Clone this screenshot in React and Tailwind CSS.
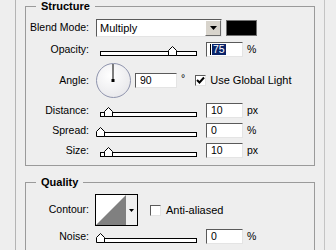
import React from "react";

const Label = ({ children }) => (
  <div className="w-[64px] shrink-0 text-right pr-[1px]">{children}</div>
);

const Input = ({ value, w = "w-[37px]", selected }) => (
  <div className={`${w} h-[15px] shrink-0 bg-white border-t border-l border-t-[#5a5a5a] border-l-[#5a5a5a] border-b border-r border-b-[#e4e4e4] border-r-[#e4e4e4] pl-[3px] flex items-center leading-none`}>
    {selected ? (
      <span className="flex items-center">
        <span className="w-[1px] h-[11px] bg-black mr-[1px]" />
        <span className="bg-[#0a246a] text-white px-[1px] h-[11px] flex items-center">{value}</span>
      </span>
    ) : (
      <span className="pl-[1px]">{value}</span>
    )}
  </div>
);

const Slider = ({ pos }) => (
  <div className="relative w-[97px] h-[15px] ml-[10px] shrink-0">
    <div className="absolute left-0 right-0 top-[9px] h-[5px] border border-black bg-white" />
    <svg className="absolute top-[4px]" style={{ left: pos - 4 }} width="9" height="10">
      <path d="M0.5 4.5 L4.5 0.5 L8.5 4.5 L8.5 9.5 L0.5 9.5 Z" fill="white" stroke="black" />
    </svg>
  </div>
);

const SliderRow = ({ label, value, unit, pos, selected, className = "" }) => (
  <div className={`flex items-center h-[15px] ${className}`}>
    <Label>{label}</Label>
    <Slider pos={pos} />
    <div className="ml-[9px]">
      <Input value={value} selected={selected} />
    </div>
    <span className="ml-[4px] leading-none">{unit}</span>
  </div>
);

const Check = ({ checked }) => (
  <div className="w-[11px] h-[11px] shrink-0 bg-white border-t border-l border-t-[#5a5a5a] border-l-[#5a5a5a] border-b border-r border-b-[#e4e4e4] border-r-[#e4e4e4] flex items-center justify-center">
    {checked && (
      <svg width="9" height="9" viewBox="0 0 9 9">
        <path d="M1 4 L3.5 6.5 L8 1.5" fill="none" stroke="black" strokeWidth="2" />
      </svg>
    )}
  </div>
);

export default function App() {
  return (
    <div
      className="w-[336px] h-[250px] overflow-hidden bg-[#eeeeee] text-[10.5px] text-black pl-[15px]"
      style={{ fontFamily: '"Liberation Sans", Arial, sans-serif' }}
    >
      <div className="w-[310px] h-[250px] border-l border-r border-l-[#b4b4b4] border-r-[#c4c4c4]">
        <fieldset className="ml-[9px] mr-[9px] border border-[#9a9a9a] pb-[7px]">
          <legend className="ml-[10px] px-[5px] font-bold leading-[13px] text-[11px]">Structure</legend>

          <div className="flex items-center h-[18px] mt-[6px]">
            <Label>Blend Mode:</Label>
            <div className="ml-[6px] w-[126px] h-[18px] shrink-0 bg-white border-t border-l border-t-[#5a5a5a] border-l-[#5a5a5a] border-b border-r border-b-[#e4e4e4] border-r-[#e4e4e4] flex items-center">
              <span className="pl-[3px] flex-1 leading-none text-[11px]">Multiply</span>
              <div className="w-[16px] h-[16px] bg-[#d8d4cc] border-t border-l border-t-white border-l-white border-b border-r border-b-[#6a6a6a] border-r-[#6a6a6a] flex items-center justify-center">
                <svg width="7" height="4" viewBox="0 0 7 4">
                  <path d="M0 0 L7 0 L3.5 4 Z" fill="black" />
                </svg>
              </div>
            </div>
            <div className="ml-[4px] w-[31px] h-[16px] bg-black border border-[#707070]" />
          </div>

          <SliderRow label="Opacity:" value="75" unit="%" pos={72} selected className="mt-[5px]" />

          <div className="flex items-center h-[35px] mt-[6px]">
            <Label>Angle:</Label>
            <div className="ml-[6px] w-[35px] h-[35px] shrink-0 rounded-full border-[1.5px] border-[#8f94ad] bg-[radial-gradient(circle_at_40%_35%,#ffffff,#e2e2e6)] relative">
              <svg className="absolute left-0 top-0" width="32" height="32" viewBox="0 0 32 32">
                <line x1="16" y1="0" x2="16" y2="16.5" stroke="black" strokeWidth="1" />
                <rect x="14.5" y="15" width="3" height="3" fill="black" />
              </svg>
            </div>
            <div className="ml-[4px]">
              <Input value="90" w="w-[42px]" />
            </div>
            <span className="ml-[4px] self-start mt-[10px] leading-none">°</span>
            <div className="ml-[10px]">
              <Check checked />
            </div>
            <span className="ml-[4px] leading-none text-[11px]">Use Global Light</span>
          </div>

          <SliderRow label="Distance:" value="10" unit="px" pos={8} className="mt-[5px]" />
          <SliderRow label="Spread:" value="0" unit="%" pos={0} className="mt-[5px]" />
          <SliderRow label="Size:" value="10" unit="px" pos={8} className="mt-[5px]" />
        </fieldset>

        <fieldset className="ml-[9px] mr-[9px] mt-[10px] border border-[#9a9a9a] pb-[20px]">
          <legend className="ml-[10px] px-[5px] font-bold leading-[13px] text-[11px]">Quality</legend>

          <div className="flex items-center h-[32px] mt-[5px]">
            <Label>Contour:</Label>
            <div className="ml-[5px] w-[43px] h-[32px] shrink-0 border border-black bg-white flex">
              <svg width="30" height="30" viewBox="0 0 30 30">
                <path d="M0 30 L30 0 L30 30 Z" fill="#808080" />
              </svg>
              <div className="flex-1 bg-[#f0f0f0] flex items-center justify-center">
                <svg width="5" height="3" viewBox="0 0 5 3">
                  <path d="M0 0 L5 0 L2.5 3 Z" fill="black" />
                </svg>
              </div>
            </div>
            <div className="ml-[12px]">
              <Check />
            </div>
            <span className="ml-[5px] leading-none text-[11px]">Anti-aliased</span>
          </div>

          <SliderRow label="Noise:" value="0" unit="%" pos={0} className="mt-[3px]" />
        </fieldset>
      </div>
    </div>
  );
}
